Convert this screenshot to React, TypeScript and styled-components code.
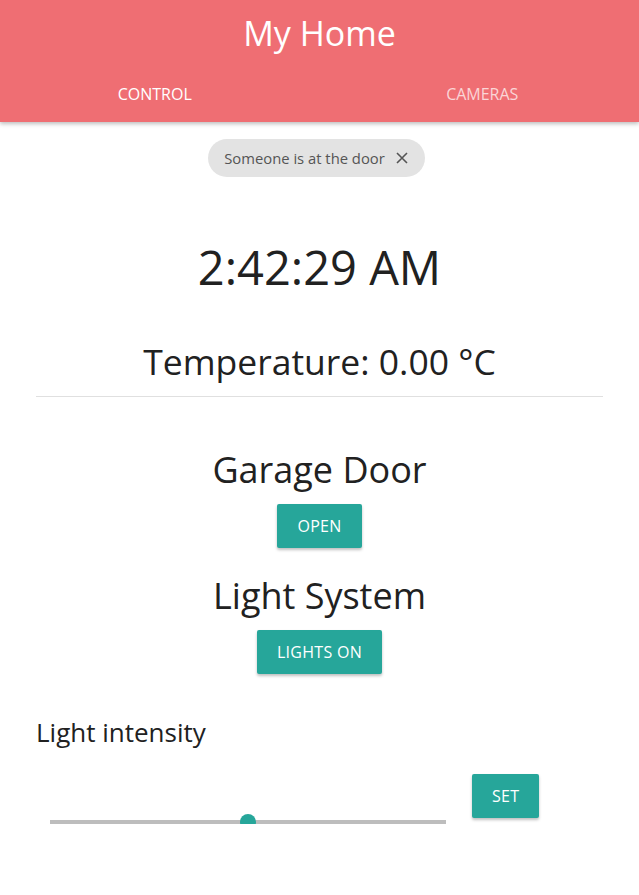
import React from "react";
import styled, { createGlobalStyle } from "styled-components";

const Global = createGlobalStyle`
  html, body { margin: 0; padding: 0; background: #fff; }
  body { font-family: "Open Sans", "Noto Sans", sans-serif; color: #212121; }
  * { box-sizing: border-box; }
`;

const Header = styled.header`
  background: #ef6e73;
  box-shadow: 0 2px 4px rgba(0,0,0,0.25);
  color: #fff;
  height: 122px;
  display: flex;
  flex-direction: column;
  align-items: center;
`;

const Title = styled.h1`
  margin: 11px 0 0;
  font-weight: 400;
  font-size: 34px;
  line-height: 44px;
`;

const Tabs = styled.nav`
  width: 100%;
  display: grid;
  grid-template-columns: 1fr 1fr;
  margin-top: 17px;
`;

const Tab = styled.div<{ $active?: boolean }>`
  text-align: center;
  font-size: 16px;
  line-height: 44px;
  text-transform: uppercase;
  color: ${(p) => (p.$active ? "#fff" : "rgba(255,255,255,0.72)")};
  padding: ${(p) => (p.$active ? "0 10px 0 0" : "0 0 0 6px")};
`;

const Main = styled.main`
  display: flex;
  flex-direction: column;
  align-items: center;
  padding: 17px 36px 0;
`;

const Chip = styled.div`
  display: inline-flex;
  align-items: center;
  height: 38px;
  margin-right: 6px;
  padding: 0 17px 0 16px;
  border-radius: 19px;
  background: #e3e3e3;
  color: #555;
  font-size: 14.8px;
  gap: 11px;
`;

const Clock = styled.div`
  margin-top: 58px;
  font-size: 47px;
  line-height: 64px;
`;

const Temp = styled.div`
  margin-top: 40px;
  font-size: 35.5px;
  line-height: 44px;
`;

const Divider = styled.hr`
  align-self: stretch;
  border: 0;
  border-top: 1px solid #e0e0e0;
  margin: 13px 0 0;
`;

const SectionTitle = styled.h2<{ $mt: number }>`
  margin: ${(p) => p.$mt}px 0 11px;
  font-weight: 400;
  font-size: 36px;
  line-height: 46px;
`;

const Button = styled.button`
  background: #26a69a;
  color: #fff;
  border: 0;
  border-radius: 2px;
  height: 44px;
  padding: 0 20px;
  font-family: inherit;
  font-size: 16px;
  letter-spacing: 0.3px;
  text-transform: uppercase;
  box-shadow: 0 2px 3px rgba(0,0,0,0.25);
`;

const Intensity = styled.div`
  align-self: stretch;
  margin-top: 40px;
  font-size: 26px;
  line-height: 36px;
`;

const SliderRow = styled.div`
  align-self: stretch;
  display: flex;
  align-items: flex-start;
  margin-top: 24px;
`;

const Track = styled.div`
  position: relative;
  margin: 46px 0 0 14px;
  width: 396px;
  height: 4px;
  background: #bdbdbd;
`;

const Thumb = styled.div`
  position: absolute;
  top: -6px;
  width: 16px;
  height: 16px;
  border-radius: 50%;
  background: #26a69a;
  transform: translateX(-50%);
`;

const SetButton = styled(Button)`
  margin-left: 26px;
`;

export default function App() {
  const value = 0.499;
  return (
    <>
      <Global />
      <Header>
        <Title>My Home</Title>
        <Tabs>
          <Tab $active>Control</Tab>
          <Tab>Cameras</Tab>
        </Tabs>
      </Header>
      <Main>
        <Chip>
          <span>Someone is at the door</span>
          <svg width="12" height="12" viewBox="0 0 12 12">
            <path d="M1 1L11 11M11 1L1 11" stroke="#555" strokeWidth="1.6" />
          </svg>
        </Chip>
        <Clock>2:42:29 AM</Clock>
        <Temp>Temperature: 0.00 °C</Temp>
        <Divider />
        <SectionTitle $mt={50}>Garage Door</SectionTitle>
        <Button>Open</Button>
        <SectionTitle $mt={25}>Light System</SectionTitle>
        <Button>Lights on</Button>
        <Intensity>Light intensity</Intensity>
        <SliderRow>
          <Track>
            <Thumb style={{ left: `${value * 100}%` }} />
          </Track>
          <SetButton>Set</SetButton>
        </SliderRow>
      </Main>
    </>
  );
}
